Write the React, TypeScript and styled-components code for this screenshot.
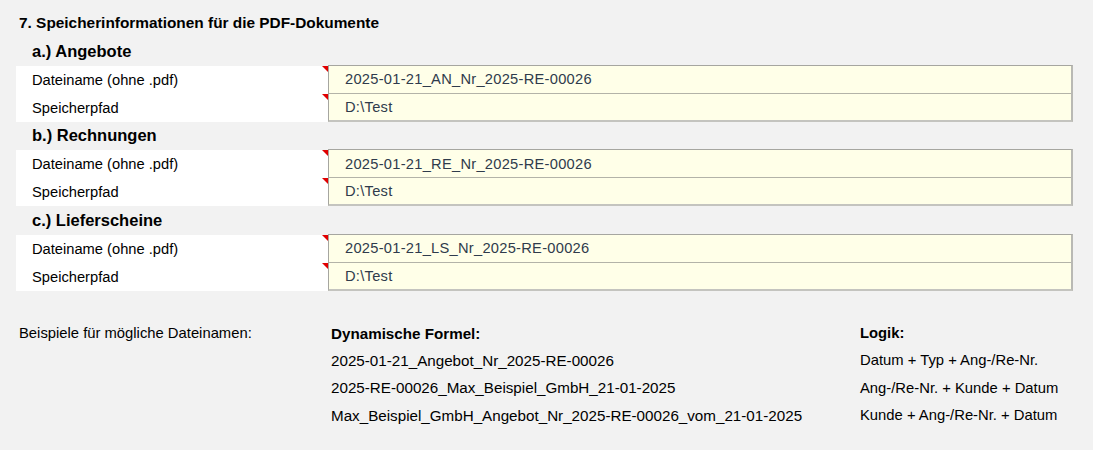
import { Fragment } from 'react'
import styled, { createGlobalStyle } from 'styled-components'

const GlobalStyle = createGlobalStyle`
  html, body {
    margin: 0;
    padding: 0;
    background: #f2f2f2;
    font-family: "Liberation Sans", Arial, sans-serif;
    color: #000;
  }
`

const Page = styled.div`
  width: 1093px;
  height: 450px;
  box-sizing: border-box;
  padding: 8px 20px 0 16px;
  background: #f2f2f2;
  overflow: hidden;
`

const Title = styled.div`
  height: 29px;
  display: flex;
  align-items: center;
  padding-left: 3px;
  font-size: 15.4px;
  font-weight: bold;
`

const SectionHead = styled.div`
  height: 28.5px;
  display: flex;
  align-items: center;
  padding-left: 16px;
  font-size: 16.5px;
  font-weight: bold;
`

const Block = styled.div`
  display: grid;
  grid-template-columns: 312px 745px;
  grid-template-rows: 28px 28px;
`

const Label = styled.div<{ $row: number }>`
  position: relative;
  grid-column: 1;
  grid-row: ${(p) => p.$row};
  display: flex;
  align-items: center;
  padding-left: 16px;
  background: #fff;
  font-size: 14.7px;

  &::after {
    content: '';
    position: absolute;
    top: 0;
    right: 0;
    border-top: 6px solid #e00000;
    border-left: 6px solid transparent;
  }
`

const Inputs = styled.div`
  grid-column: 2;
  grid-row: 1 / span 2;
  display: flex;
  flex-direction: column;
  border: 1px solid #a6a6a0;
  border-right: 2px solid #b9b9b4;
  border-bottom: 2px solid #c4c4bf;
  margin-top: -1px;
  background: #ffffe8;
`

const Field = styled.div<{ $last?: boolean }>`
  height: ${(p) => (p.$last ? '26px' : '28px')};
  box-sizing: border-box;
  display: flex;
  align-items: center;
  padding-left: 16px;
  font-size: 14.67px;
  letter-spacing: 0.27px;
  color: #2f3b4c;
  border-bottom: ${(p) => (p.$last ? 'none' : '1px solid #b3b3a8')};
`

const Examples = styled.div`
  margin-top: 29px;
  display: grid;
  grid-template-columns: 315px 529px 1fr;
`

const Cell = styled.div<{ $bold?: boolean; $kind: 'note' | 'formula' | 'logic' }>`
  height: 27.3px;
  display: flex;
  align-items: center;
  white-space: nowrap;
  padding-left: ${(p) => (p.$kind === 'note' ? '3px' : '0')};
  font-weight: ${(p) => (p.$bold ? 'bold' : 'normal')};
  font-size: ${(p) => (p.$kind === 'formula' ? '15.2px' : '14.8px')};
`

const sections = [
  { head: 'a.) Angebote', name: '2025-01-21_AN_Nr_2025-RE-00026' },
  { head: 'b.) Rechnungen', name: '2025-01-21_RE_Nr_2025-RE-00026' },
  { head: 'c.) Lieferscheine', name: '2025-01-21_LS_Nr_2025-RE-00026' },
]

const examples = [
  ['2025-01-21_Angebot_Nr_2025-RE-00026', 'Datum + Typ + Ang-/Re-Nr.'],
  ['2025-RE-00026_Max_Beispiel_GmbH_21-01-2025', 'Ang-/Re-Nr. + Kunde + Datum'],
  ['Max_Beispiel_GmbH_Angebot_Nr_2025-RE-00026_vom_21-01-2025', 'Kunde + Ang-/Re-Nr. + Datum'],
]

export default function App() {
  return (
    <>
      <GlobalStyle />
      <Page>
        <Title>7. Speicherinformationen für die PDF-Dokumente</Title>
        {sections.map((s) => (
          <div key={s.head}>
            <SectionHead>{s.head}</SectionHead>
            <Block>
              <Label $row={1}>Dateiname (ohne .pdf)</Label>
              <Label $row={2}>Speicherpfad</Label>
              <Inputs>
                <Field>{s.name}</Field>
                <Field $last>D:\Test</Field>
              </Inputs>
            </Block>
          </div>
        ))}
        <Examples>
          <Cell $kind="note">Beispiele für mögliche Dateinamen:</Cell>
          <Cell $kind="formula" $bold>Dynamische Formel:</Cell>
          <Cell $kind="logic" $bold>Logik:</Cell>
          {examples.map(([f, l]) => (
            <Fragment key={f}>
              <Cell $kind="note" />
              <Cell $kind="formula">{f}</Cell>
              <Cell $kind="logic">{l}</Cell>
            </Fragment>
          ))}
        </Examples>
      </Page>
    </>
  )
}
